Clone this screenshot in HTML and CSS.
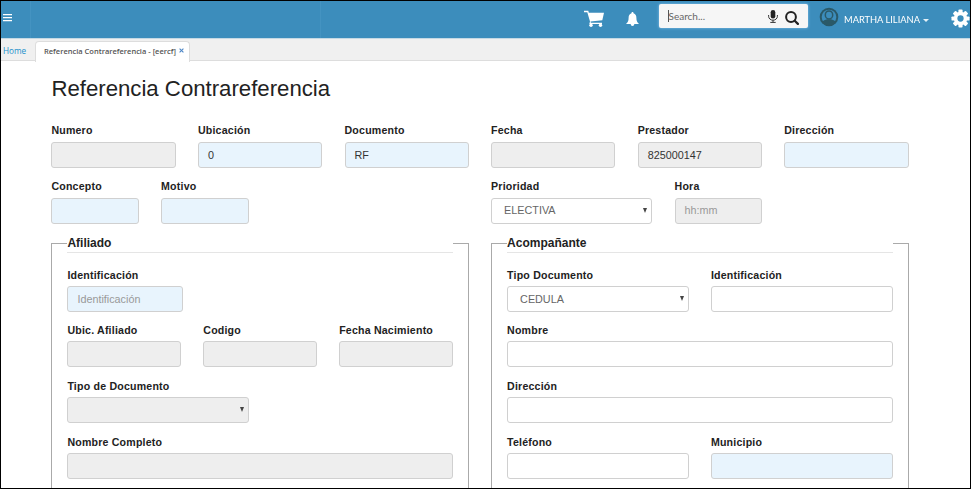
FILE: index.html
```html
<!DOCTYPE html>
<html lang="es">
<head>
<meta charset="utf-8">
<title>Referencia Contrareferencia</title>
<link rel="stylesheet" href="styles.css">
</head>
<body>
<div class="app">
  <header class="topbar">
    <div class="menu"><span class="burger"><i></i><i></i><i></i></span></div>
    <div class="brand"></div>
    <div class="tools">
      <svg class="cart" viewBox="0 0 20 17"><path d="M0 .7h4.300l.5 2H20l-1.700 7.500-11.800 1.300.4 1.200H18v1.400H5.300L6 11.500 3.300 2.300H0z" fill="#fff"/><circle cx="7" cy="15.300" r="1.700" fill="#fff"/><circle cx="16.500" cy="15.300" r="1.700" fill="#fff"/></svg>
      <svg class="bell" viewBox="0 0 13 15"><path d="M6.500 0c.7 0 1 .5 1 1.200C9.600 1.800 10.400 3.500 10.400 6c0 3 .8 4.500 2.600 6H8.300c0 1.200-.7 2-1.800 2s-1.800-.8-1.800-2H0c1.800-1.500 2.600-3 2.600-6 0-2.500.8-4.200 2.900-4.800C5.500.5 5.800 0 6.500 0z" fill="#fff"/></svg>
      <div class="search">
        <i class="caret"></i><span class="hint">Search...</span>
        <svg class="mic" viewBox="0 0 10 13"><rect x="2.700" y="0" width="4.600" height="8.500" rx="2.300" fill="#222"/><path d="M.6 5v1.300a4.400 3.900 0 0 0 8.800 0V5M5 10.200v2M2.300 12.400h5.400" fill="none" stroke="#333" stroke-width="1"/></svg>
        <svg class="lens" viewBox="0 0 14 14"><circle cx="6" cy="6" r="4.900" fill="none" stroke="#222" stroke-width="2"/><path d="M9.700 9.700l3.200 3.200" stroke="#222" stroke-width="2.200" stroke-linecap="round"/></svg>
      </div>
      <svg class="avatar" viewBox="0 0 20 20"><circle cx="10" cy="10" r="9.300" fill="#2a5968"/><circle cx="10" cy="10" r="7.300" fill="#3c8dbc"/><ellipse cx="10" cy="7.900" rx="3.700" ry="4" fill="#3c8dbc" stroke="#2a5968" stroke-width="1.500"/><path d="M3.200 15.300c1-2 3-2.300 4.800-3h4c1.800.7 3.800 1 4.800 3a8.600 8.600 0 0 1-13.600 0z" fill="#2a5968"/></svg>
      <span class="user">MARTHA LILIANA</span><i class="drop"></i>
      <svg class="gear" viewBox="-10 -10 20 20"><g fill="#fff"><circle r="7"/><g id="t"><rect x="-2.200" y="-9.500" width="4.400" height="19" rx="1"/><rect x="-9.500" y="-2.200" width="19" height="4.400" rx="1"/></g><use href="#t" transform="rotate(45)"/></g><circle r="3.300" fill="#3c8dbc"/></svg>
    </div>
  </header>
  <nav class="tabs">
    <a class="home">Home</a>
    <div class="tab"><span class="tabname">Referencia Contrareferencia - [eercf]</span><svg class="close" viewBox="0 0 6 6"><path d="M.7.7l4.600 4.600M5.300.7L.7 5.300" stroke="#4c86c6" stroke-width="1.300"/></svg></div>
  </nav>
  <main class="page">
    <h1><span>Referencia Contrareferencia</span></h1>
    <div class="row six">
      <div class="group"><label>Numero</label><div class="field off"></div></div>
      <div class="group"><label>Ubicación</label><div class="field req">0</div></div>
      <div class="group"><label>Documento</label><div class="field req">RF</div></div>
      <div class="group"><label>Fecha</label><div class="field off"></div></div>
      <div class="group"><label>Prestador</label><div class="field off">825000147</div></div>
      <div class="group"><label>Dirección</label><div class="field req"></div></div>
    </div>
    <div class="halves">
      <div class="row short">
        <div class="group"><label>Concepto</label><div class="field req"></div></div>
        <div class="group"><label>Motivo</label><div class="field req"></div></div>
      </div>
      <div class="row priority">
        <div class="group"><label>Prioridad</label><div class="field select">ELECTIVA<i class="arrow"></i></div></div>
        <div class="group"><label>Hora</label><div class="field off hint-text">hh:mm</div></div>
      </div>
    </div>
    <div class="halves">
      <fieldset>
        <legend>Afiliado</legend>
        <div class="row ident"><div class="group"><label>Identificación</label><div class="field req hint-text">Identificación</div></div></div>
        <div class="row three">
          <div class="group"><label>Ubic. Afiliado</label><div class="field off"></div></div>
          <div class="group"><label>Codigo</label><div class="field off"></div></div>
          <div class="group"><label>Fecha Nacimiento</label><div class="field off"></div></div>
        </div>
        <div class="row two"><div class="group"><label>Tipo de Documento</label><div class="field off select"><i class="arrow"></i></div></div></div>
        <div class="row"><div class="group"><label>Nombre Completo</label><div class="field off"></div></div></div>
      </fieldset>
      <fieldset>
        <legend>Acompañante</legend>
        <div class="row two">
          <div class="group"><label>Tipo Documento</label><div class="field select">CEDULA<i class="arrow"></i></div></div>
          <div class="group"><label>Identificación</label><div class="field"></div></div>
        </div>
        <div class="row"><div class="group"><label>Nombre</label><div class="field"></div></div></div>
        <div class="row"><div class="group"><label>Dirección</label><div class="field"></div></div></div>
        <div class="row two">
          <div class="group"><label>Teléfono</label><div class="field"></div></div>
          <div class="group"><label>Municipio</label><div class="field req"></div></div>
        </div>
      </fieldset>
    </div>
  </main>
</div>
</body>
</html>
```
FILE: styles.css
```css
* { box-sizing: border-box; }
body { margin: 0; background: #fff; color: #222; font-family: "Liberation Sans", Arial, sans-serif; }
.app { width: 971px; height: 489px; border: 1px solid #000; overflow: hidden; }

.topbar { display: flex; height: 37px; background: #3c8dbc; }
.menu { width: 30px; padding: 13px 0 0 2px; border-right: 1px solid #4493c1; }
.burger { display: flex; flex-direction: column; gap: 2px; width: 9px; }
.burger i { height: 1px; background: #fff; box-shadow: 0 1px 0 rgba(255, 255, 255, .25); }
.brand { width: 290px; border-right: 1px solid #4493c1; }
.tools { display: flex; flex: 1; align-items: flex-start; padding-left: 263px; }
.tools svg { flex: none; display: block; }
.cart { width: 20px; height: 17px; margin-top: 9px; }
.bell { width: 13px; height: 15px; margin: 11px 0 0 22px; }
.search { display: flex; flex: none; width: 149px; height: 24px; margin: 3px 0 0 19.500px; padding-left: 9px; background: #f6f6f6; border-radius: 2px; box-shadow: 0 0 3px #8cc4ee; }
.caret { width: 1px; height: 12px; margin: 6px 0 0; background: #555; }
.hint { width: 99px; padding-top: 5px; font: 10px/15px Lato, sans-serif; color: #666; }
.mic { width: 10px; height: 13px; margin-top: 6px; }
.lens { width: 14px; height: 14px; margin: 7px 0 0 7px; }
.avatar { width: 20px; height: 20px; margin: 5.500px 0 0 11px; filter: blur(.5px); }
.user { flex: none; width: 76px; margin: 11px 0 0 5.500px; font: 9.300px/15px Lato, sans-serif; color: #fff; white-space: nowrap; filter: blur(.6px); }
.drop { margin: 18px 0 0 3px; border: 3px solid transparent; border-top-color: #e4f1f8; border-bottom: 0; }
.gear { width: 19px; height: 19px; margin: 7.500px 0 0 22px; }

.tabs { display: flex; height: 23px; padding-left: 2px; background: #f0f0f0; border-top: 1px solid #c5d9e4; border-bottom: 1px solid #ddd; }
.home { width: 32px; padding-top: 4px; font: 8.200px/15px "Open Sans", sans-serif; color: #1b8fcb; }
.tab { display: flex; width: 155px; height: 21px; margin-top: 2px; padding-left: 8px; background: #fff; border: 1px solid #ddd; border-bottom: 0; border-radius: 4px 4px 0 0; }
.tabname { width: 132px; padding-top: 2px; font: 600 7.500px/14px "Open Sans", sans-serif; color: #555; white-space: nowrap; }
.close { width: 5px; height: 5px; margin: 6px 0 0 3px; }

.page { width: 907.600px; padding: 14.500px 0 0 50.400px; }
h1 { height: 26px; margin: 0 0 21.700px; font-size: 22.200px; line-height: 26px; font-weight: 400; }
.row { display: grid; column-gap: 22.200px; height: 45px; margin-bottom: 10.700px; }
.six { grid-template-columns: repeat(6, 1fr); }
.short { grid-template-columns: 87.500px 87.500px; }
.priority { grid-template-columns: 161.300px 87.500px; }
.ident { grid-template-columns: 116px; }
.three { grid-template-columns: repeat(3, 1fr); }
.two { grid-template-columns: 1fr 1fr; }
.halves { display: grid; grid-template-columns: 1fr 1fr; column-gap: 22.200px; }
label { display: block; height: 19px; font-size: 10.600px; line-height: 14.500px; font-weight: 700; letter-spacing: .2px; white-space: nowrap; }
fieldset label { line-height: 16px; }
.field { display: flex; align-items: center; height: 26px; padding: 0 9px; border: 1px solid #d0d0d0; border-radius: 3px; background: #fff; font-size: 10.800px; color: #333; }
.off { background: #eee; }
.req { background: #e8f4fd; }
.hint-text { color: #999; }
.select { justify-content: space-between; padding: 0 4px 0 12px; color: #666; }
.priority .field { line-height: 12px; padding-bottom: 1px; }
.arrow { margin-left: auto; border: 2.500px solid transparent; border-top: 5px solid #444; border-bottom: 0; }

fieldset { min-width: 0; height: 280px; margin: 0; padding: 14px 15px 0; border: 1px solid #aaa; }
legend { width: 100%; height: 18px; padding: 0; border-bottom: 1px solid #e5e5e5; font-size: 12px; line-height: 17px; font-weight: 700; }
```
